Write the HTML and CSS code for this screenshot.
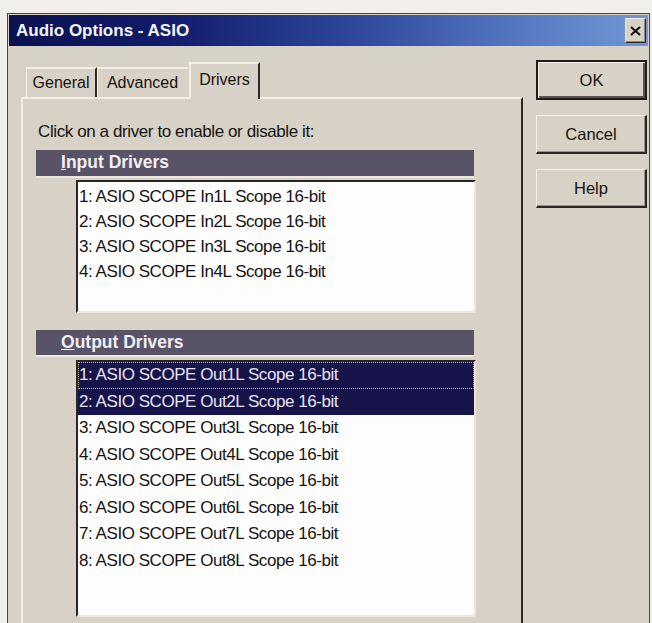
FILE: index.html
```html
<!DOCTYPE html>
<html lang="en">
<head>
<meta charset="utf-8">
<title>Audio Options - ASIO</title>
<link rel="stylesheet" href="styles.css">
</head>
<body>
<div class="window">
  <div class="titlebar">
    <span class="title">Audio Options - ASIO</span>
    <button class="close" aria-label="Close">
      <svg width="11" height="10" viewBox="0 0 11 10"><path d="M1 1 L10 9 M10 1 L1 9" stroke="#111" stroke-width="2.2" fill="none"/></svg>
    </button>
  </div>
  <div class="content">
    <div class="tabs">
      <div class="tabstrip">
        <div class="tab tab-general">General</div>
        <div class="tab tab-advanced">Advanced</div>
        <div class="tab tab-drivers active">Drivers</div>
      </div>
      <div class="panel">
        <p class="hint">Click on a driver to enable or disable it:</p>
        <div class="group-head"><u>I</u>nput Drivers</div>
        <ul class="listbox list-input">
          <li>1: ASIO SCOPE In1L Scope 16-bit</li>
          <li>2: ASIO SCOPE In2L Scope 16-bit</li>
          <li>3: ASIO SCOPE In3L Scope 16-bit</li>
          <li>4: ASIO SCOPE In4L Scope 16-bit</li>
        </ul>
        <div class="group-head group-output"><u>O</u>utput Drivers</div>
        <ul class="listbox list-output">
          <li class="selected focused">1: ASIO SCOPE Out1L Scope 16-bit</li>
          <li class="selected">2: ASIO SCOPE Out2L Scope 16-bit</li>
          <li>3: ASIO SCOPE Out3L Scope 16-bit</li>
          <li>4: ASIO SCOPE Out4L Scope 16-bit</li>
          <li>5: ASIO SCOPE Out5L Scope 16-bit</li>
          <li>6: ASIO SCOPE Out6L Scope 16-bit</li>
          <li>7: ASIO SCOPE Out7L Scope 16-bit</li>
          <li>8: ASIO SCOPE Out8L Scope 16-bit</li>
        </ul>
      </div>
    </div>
    <div class="actions">
      <button class="btn btn-default">OK</button>
      <button class="btn">Cancel</button>
      <button class="btn">Help</button>
    </div>
  </div>
</div>
</body>
</html>
```
FILE: styles.css
```css
html, body {
  margin: 0;
  height: 623px;
  overflow: hidden;
  background: #f1efeb;
  font-family: "Liberation Sans", Arial, sans-serif;
  color: #161412;
}

.window {
  margin: 13px 0 0 7px;
  width: 643px;
  height: 610px;
  overflow: hidden;
  box-sizing: border-box;
  border: 1px solid #4a463f;
  border-bottom: none;
  padding: 1px;
  background: #d8d1c5;
}

/* caption bar */
.titlebar {
  height: 31px;
  display: flex;
  align-items: center;
  justify-content: space-between;
  padding: 0 2px 0 7px;
  background: linear-gradient(to right, #0b1150 0%, #121c6a 25%, #2f4a9c 55%, #5a7cc4 82%, #7096d4 100%);
}

.title {
  color: #f4f4f8;
  font-weight: bold;
  font-size: 17px;
}

.close {
  width: 21px;
  height: 25px;
  padding: 0;
  display: flex;
  align-items: center;
  justify-content: center;
  background: #d8d1c5;
  border: 1px solid;
  border-color: #f6f2ea #2e2a26 #2e2a26 #f6f2ea;
  box-shadow: inset -1px -1px #8c867a;
}

.content {
  display: flex;
  align-items: flex-start;
}

/* property sheet */
.tabs {
  margin-left: 12px;
  width: 502px;
}

.tabstrip {
  height: 51px;
  display: flex;
  align-items: flex-end;
  padding-left: 5px;
  font-size: 16px;
}

.tab {
  height: 30px;
  box-sizing: border-box;
  display: flex;
  align-items: center;
  justify-content: center;
  border-top: 2px solid #f3efe7;
  border-left: 1px solid #f3efe7;
  border-right: 2px solid #2e2a26;
}

.tab-general { width: 71px; }
.tab-advanced { width: 92px; border-right-color: transparent; }

.tab-drivers {
  width: 71px;
}

.tab.active {
  height: 37px;
  margin-bottom: -2px;
  padding-bottom: 3px;
  position: relative;
  z-index: 1;
  background: #d8d1c5;
  border-left: 2px solid #f3efe7;
}

.panel {
  height: 524px;
  border-top: 2px solid #f3efe7;
  border-left: 2px solid #f3efe7;
  border-right: 2px solid #2e2a26;
  padding: 0 0 0 13px;
}

.hint {
  margin: 23px 0 0 2px;
  font-size: 17px;
  letter-spacing: -0.4px;
  line-height: 20px;
}

.group-head {
  margin-top: 8px;
  width: 438px;
  height: 28px;
  box-sizing: border-box;
  padding-left: 25px;
  background: #595368;
  border-bottom: 2px solid #ece7de;
  color: #f2f0f4;
  font-weight: bold;
  font-size: 17.5px;
  line-height: 25px;
  background-clip: padding-box;
}

.group-output {
  margin-top: 17px;
  height: 27px;
  line-height: 24px;
}

.listbox {
  list-style: none;
  margin: 2px 0 0 40px;
  width: 400px;
  box-sizing: border-box;
  padding: 2px 0 0;
  background: #fdfdfd;
  border-top: 2px solid #2a2622;
  border-left: 2px solid #2a2622;
  border-right: 2px solid #ebe6dc;
  border-bottom: 2px solid #ebe6dc;
  font-size: 17px;
  letter-spacing: -0.45px;
}

.listbox li {
  padding-left: 1px;
  white-space: nowrap;
}

.list-input {
  height: 133px;
  line-height: 25px;
}

.list-output {
  margin-top: 3px;
  height: 257px;
  padding-top: 0;
  line-height: 26.5px;
}

.listbox li.selected {
  background: #16124a;
  color: #e6e4ee;
}

.listbox li.focused {
  outline: 1px dotted #b8b290;
  outline-offset: -1px;
}

/* command buttons */
.actions {
  margin: 14px 0 0 13px;
  width: 111px;
  display: flex;
  flex-direction: column;
  gap: 15px;
}

.btn {
  height: 38px;
  padding: 0;
  font-family: inherit;
  font-size: 16.5px;
  color: #161412;
  background: #d8d1c5;
  border-style: solid;
  border-width: 1px 2px 2px 1px;
  border-color: #f6f2ea #2a2622 #2a2622 #f6f2ea;
  box-shadow: inset -1px -1px #9a9486;
}

.btn + .btn { height: 39px; }

.btn-default {
  height: 40px;
  border: 2px solid #1e1b18;
  box-shadow: inset 1px 1px #f6f2ea, inset -2px -2px #5a554c;
}
```
